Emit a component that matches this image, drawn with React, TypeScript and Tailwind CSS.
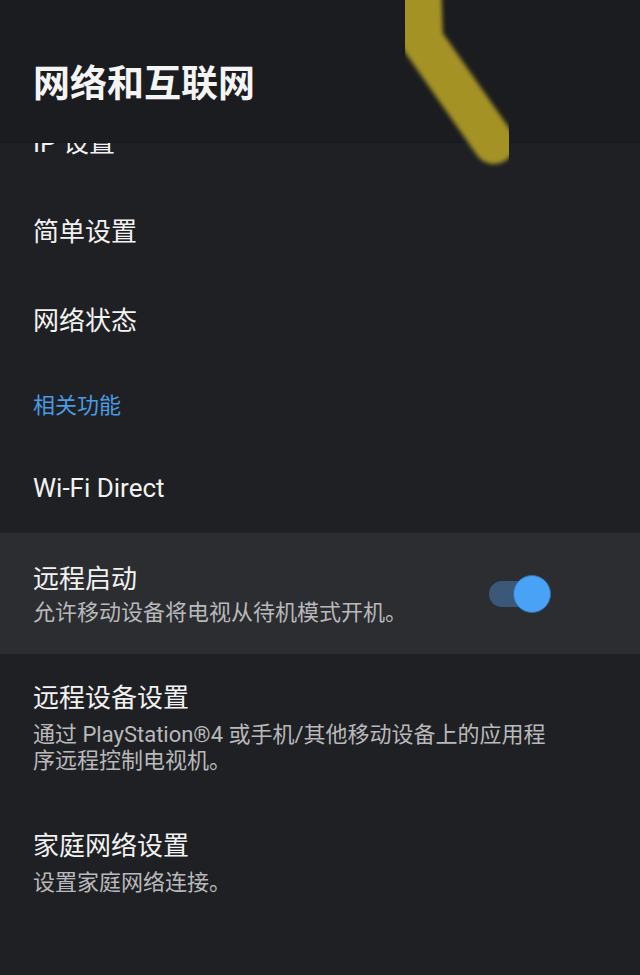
import React from 'react';

const font = { fontFamily: 'Roboto, "Noto Sans CJK SC", "Noto Sans", sans-serif' };

const SimpleRow = ({ label }: { label: string }) => (
  <div className="h-[89px] flex items-center px-[33px] text-[26px] text-[#f2f2f2]">{label}</div>
);

const DetailRow = ({ title, desc, pt, pb }: { title: string; desc: string; pt: string; pb: string }) => (
  <div className={`px-[33px] ${pt} ${pb}`}>
    <div className="text-[26px] leading-[34px] text-[#f2f2f2]">{title}</div>
    <div className="mt-[7px] text-[22px] leading-[26px] text-[#b9b9bb] max-w-[520px]">{desc}</div>
  </div>
);

const Toggle = () => (
  <div className="relative w-[62px] h-[38px] flex items-center">
    <div className="w-[48px] h-[26px] rounded-full bg-[#3b5878]" />
    <div className="absolute right-0 top-0 w-[38px] h-[38px] rounded-full bg-[#4aa2f6] border border-[#2f6ea8]" />
  </div>
);

export default function App() {
  return (
    <div className="relative w-[640px] h-[975px] overflow-hidden bg-[#1f2024]" style={font}>
      <div className="relative z-10 h-[142px] bg-[#1b1c20] shadow-[0_1px_0_#17181b] flex items-center px-[33px] pt-[22px]">
        <h1 className="text-[37px] font-bold text-[#f4f4f4]" style={{ fontFamily: '"Noto Sans CJK SC", sans-serif' }}>
          网络和互联网
        </h1>
      </div>
      <div className="overflow-hidden">
        <div className="-mt-[43px]">
          <SimpleRow label="IP 设置" />
          <SimpleRow label="简单设置" />
          <SimpleRow label="网络状态" />
          <div className="h-[78px] flex items-center px-[33px] text-[22px] text-[#4a9be2]">相关功能</div>
          <SimpleRow label="Wi-Fi Direct" />
          <div className="h-[121px] bg-[#2c2d31] flex items-center justify-between pl-[33px] pr-[89px]">
            <div>
              <div className="text-[26px] leading-[34px] text-[#f2f2f2]">远程启动</div>
              <div className="mt-[4px] text-[22px] leading-[26px] text-[#b9b9bb]">允许移动设备将电视从待机模式开机。</div>
            </div>
            <Toggle />
          </div>
          <DetailRow
            title="远程设备设置"
            desc="通过 PlayStation®4 或手机/其他移动设备上的应用程序远程控制电视机。"
            pt="pt-[27px]"
            pb="pb-[28px]"
          />
          <DetailRow title="家庭网络设置" desc="设置家庭网络连接。" pt="pt-[27px]" pb="pb-[26px]" />
        </div>
      </div>
      <svg className="absolute left-0 top-0 z-20 pointer-events-none" width="640" height="200">
        <defs>
          <filter id="blur" x="-20%" y="-20%" width="140%" height="140%">
            <feGaussianBlur stdDeviation="2" />
          </filter>
        </defs>
        <path
          d="M420 -20 L422 40 L494 143"
          stroke="#b09c28"
          strokeWidth="42"
          strokeLinecap="round"
          strokeLinejoin="round"
          fill="none"
          filter="url(#blur)"
          opacity="0.92"
        />
      </svg>
    </div>
  );
}
